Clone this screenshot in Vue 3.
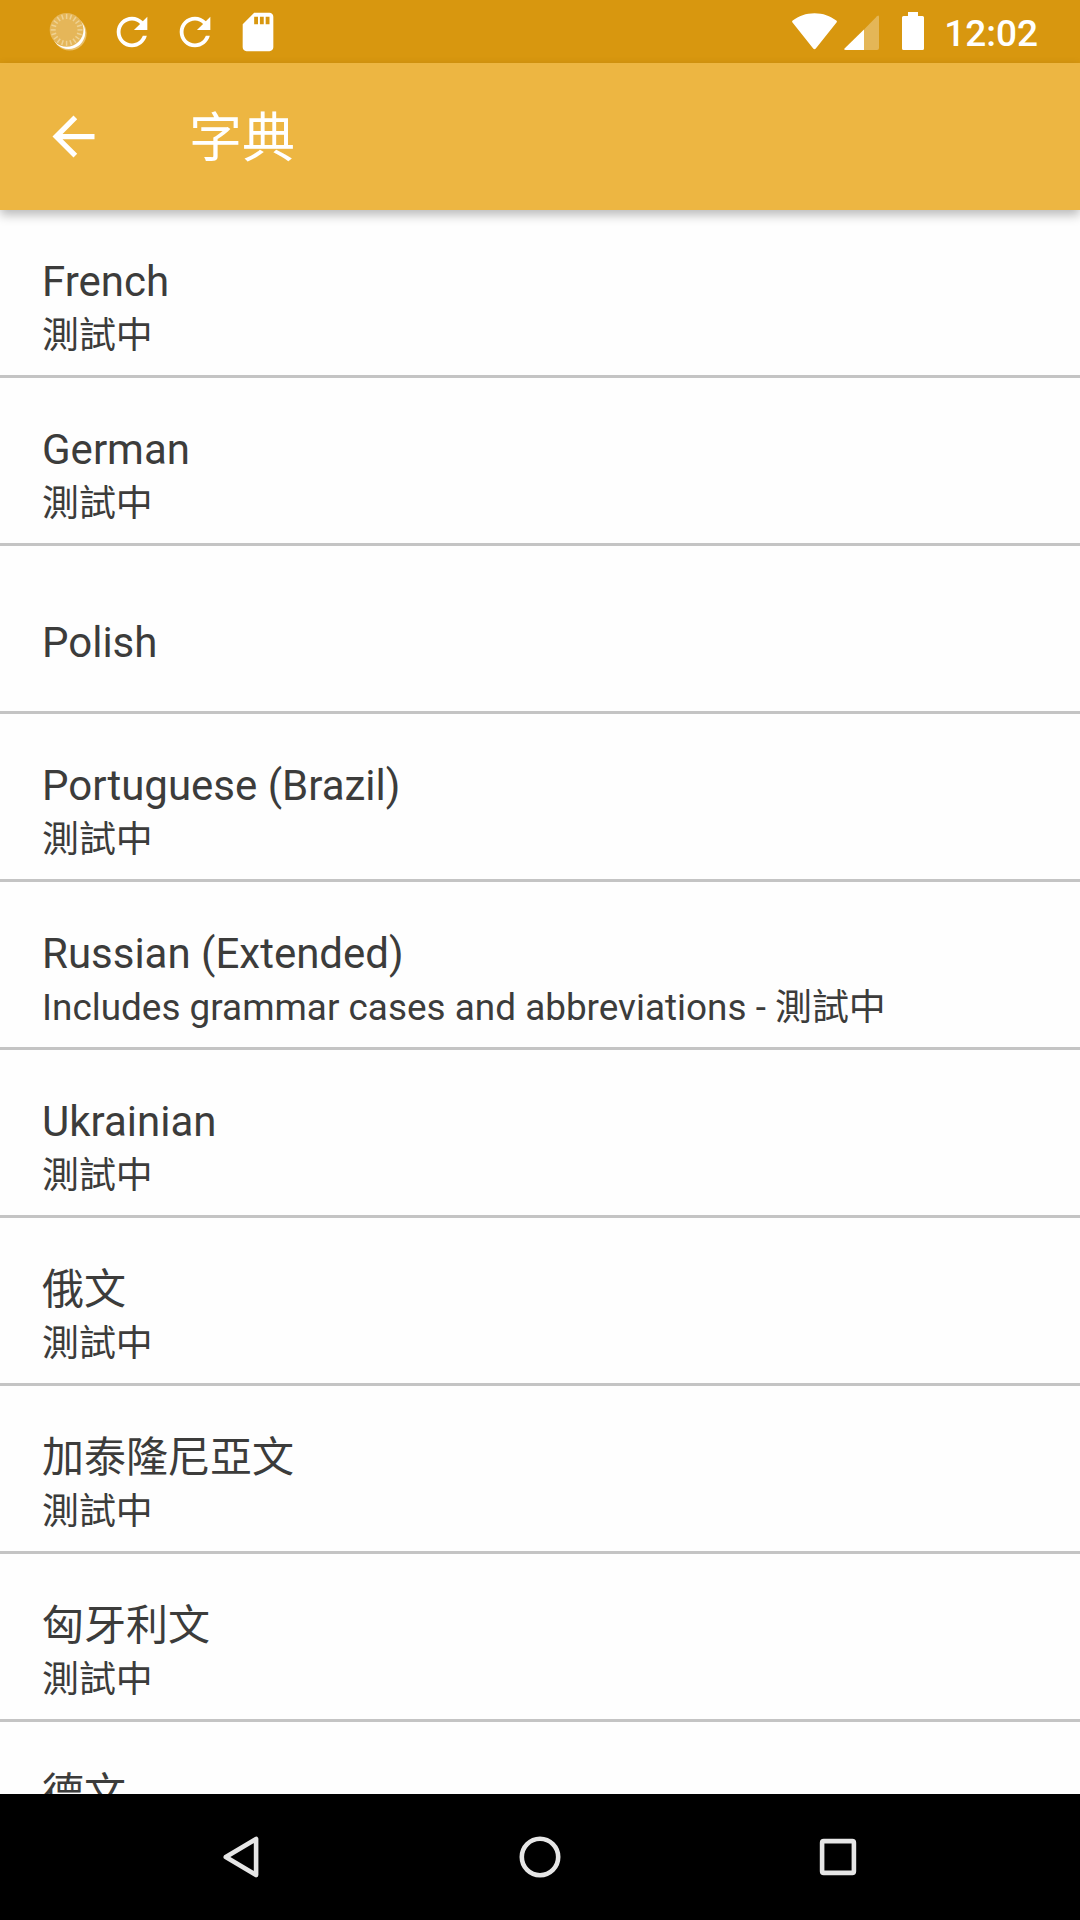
<script setup>
const dictionaries = [
  { name: 'French', note: '測試中' },
  { name: 'German', note: '測試中' },
  { name: 'Polish', centered: true },
  { name: 'Portuguese (Brazil)', note: '測試中' },
  { name: 'Russian (Extended)', note: 'Includes grammar cases and abbreviations - 測試中' },
  { name: 'Ukrainian', note: '測試中' },
  { name: '俄文', note: '測試中' },
  { name: '加泰隆尼亞文', note: '測試中' },
  { name: '匈牙利文', note: '測試中' },
  { name: '德文' },
]
const refreshPath =
  'M17.65 6.35C16.2 4.9 14.21 4 12 4c-4.42 0-7.99 3.58-7.99 8s3.57 8 7.99 8c3.73 0 6.84-2.55 7.73-6h-2.08c-.82 2.33-3.04 4-5.65 4-3.31 0-6-2.69-6-6s2.69-6 6-6c1.66 0 3.14.69 4.22 1.78L13 11h7V4l-2.35 2.35z'
const ticks = Array.from({ length: 20 }, (_, i) => i * 18)
</script>

<template>
  <div class="screen">
    <header class="status">
      <div class="notifications">
        <svg class="notif" viewBox="0 0 46 46">
          <circle cx="23.6" cy="24.6" r="17" fill="#e9c06c" />
          <circle cx="22.6" cy="23.4" r="16.6" fill="#fff" />
          <circle cx="20.6" cy="20.9" r="16.9" fill="#e5b659" />
          <g stroke="#efd293" stroke-width="1.5">
            <line
              v-for="angle in ticks"
              :key="angle"
              x1="20.6"
              y1="5"
              x2="20.6"
              y2="10"
              :transform="`rotate(${angle} 20.6 20.9)`"
            />
          </g>
        </svg>
        <svg class="notif" viewBox="0 0 24 24"><path :d="refreshPath" /></svg>
        <svg class="notif" viewBox="0 0 24 24"><path :d="refreshPath" /></svg>
        <svg class="notif" viewBox="0 0 24 24">
          <path d="M18 2h-8L4.02 8 4 20c0 1.1.9 2 2 2h12c1.1 0 2-.9 2-2V4c0-1.1-.9-2-2-2zm-6 6h-2V4h2v4zm3 0h-2V4h2v4zm3 0h-2V4h2v4z" />
        </svg>
      </div>
      <div class="system">
        <svg class="wifi" viewBox="0 0 45 37">
          <path d="M0.3 9.2C-0.1 8.6 0.1 8 0.7 7.6 6.8 2.9 14 0.2 22.5 0.2S38.2 2.9 44.3 7.6C44.9 8 45.1 8.6 44.7 9.2L23.8 35.5C23 36.5 22 36.5 21.2 35.5Z" />
        </svg>
        <svg class="signal" viewBox="0 0 35 35">
          <path d="M20 14.4 33 1.2Q35-.6 35 2V33Q35 35 33 35H20Z" fill-opacity=".3" />
          <path d="M20 14.4V35H1.8Q-.8 35 .8 33.2Z" />
        </svg>
        <svg class="battery" viewBox="0 0 22 38">
          <path d="M6 0H16V4H20.5Q22 4 22 5.5V36.5Q22 38 20.5 38H1.5Q0 38 0 36.5V5.5Q0 4 1.5 4H6Z" />
        </svg>
        <span class="clock">12:02</span>
      </div>
    </header>

    <div class="toolbar">
      <svg class="back" viewBox="0 0 24 24">
        <path d="M20 11H7.83l5.59-5.59L12 4l-8 8 8 8 1.41-1.41L7.83 13H20v-2z" />
      </svg>
      <h1>字典</h1>
    </div>

    <ul class="list">
      <li v-for="d in dictionaries" :key="d.name" :class="{ centered: d.centered }">
        <div class="name">{{ d.name }}</div>
        <div v-if="d.note" class="note">{{ d.note }}</div>
      </li>
    </ul>

    <nav class="navbar">
      <div class="key">
        <svg viewBox="0 0 44 44">
          <path d="M36.1 3.9V40.1L5.8 22Z" />
        </svg>
      </div>
      <div class="key">
        <svg viewBox="0 0 44 44"><circle cx="22" cy="22" r="18.2" /></svg>
      </div>
      <div class="key">
        <svg viewBox="0 0 44 44"><rect x="6.1" y="6.1" width="31.8" height="31.8" rx="1.6" /></svg>
      </div>
    </nav>
  </div>
</template>

<style>
body {
  margin: 0;
}
</style>

<style scoped>
.screen {
  width: 1080px;
  height: 1920px;
  display: flex;
  flex-direction: column;
  overflow: hidden;
  background: #fefefe;
  color: #3c3c3b;
  font-family: Roboto, "Noto Sans CJK TC", sans-serif;
}
svg {
  display: block;
  flex: none;
}
.status {
  flex: none;
  height: 63px;
  box-sizing: border-box;
  padding: 0 42px 0 45.5px;
  display: flex;
  align-items: center;
  justify-content: space-between;
  background: #d8970f;
  color: #fff;
}
.status svg,
.back {
  fill: #fff;
}
.notifications {
  display: flex;
  gap: 17px;
}
.notif {
  width: 46px;
  height: 46px;
}
.system {
  height: 63px;
  display: flex;
  align-items: flex-start;
}
.wifi {
  width: 45px;
  height: 37px;
  margin: 13px 7px 0 0;
}
.signal {
  width: 35px;
  height: 35px;
  margin: 15px 23px 0 0;
}
.battery {
  width: 22px;
  height: 38px;
  margin: 12px 20.5px 0 0;
}
.clock {
  font-size: 37px;
  font-weight: 500;
  line-height: 43px;
  margin-top: 12px;
}
.toolbar {
  flex: none;
  position: relative;
  z-index: 1;
  height: 147px;
  box-sizing: border-box;
  padding-left: 41.5px;
  display: flex;
  align-items: center;
  background: #edb642;
  box-shadow: 0 5px 10px rgba(0, 0, 0, 0.27);
}
.back {
  width: 63px;
  height: 63px;
}
h1 {
  margin: 5px 0 0 84.5px;
  font-size: 53px;
  line-height: 62px;
  font-weight: 400;
  color: #fff;
}
.list {
  flex: 1;
  min-height: 0;
  overflow: hidden;
  margin: 0;
  padding: 0;
  list-style: none;
}
li {
  height: 168px;
  box-sizing: border-box;
  padding: 47px 42px 0;
  border-bottom: 3px solid #c4c4c4;
}
li.centered {
  padding-top: 72px;
}
.name {
  font-size: 42px;
  line-height: 49px;
}
.note {
  margin-top: 8px;
  font-size: 36.9px;
  line-height: 43px;
  white-space: nowrap;
}
.navbar {
  flex: none;
  height: 126px;
  display: flex;
  align-items: center;
  justify-content: center;
  background: #000;
}
.key {
  width: 298px;
  display: flex;
  justify-content: center;
}
.key svg {
  width: 44px;
  height: 44px;
  fill: none;
  stroke: #e6e6e6;
  stroke-width: 4.6;
  stroke-linejoin: round;
}
</style>
